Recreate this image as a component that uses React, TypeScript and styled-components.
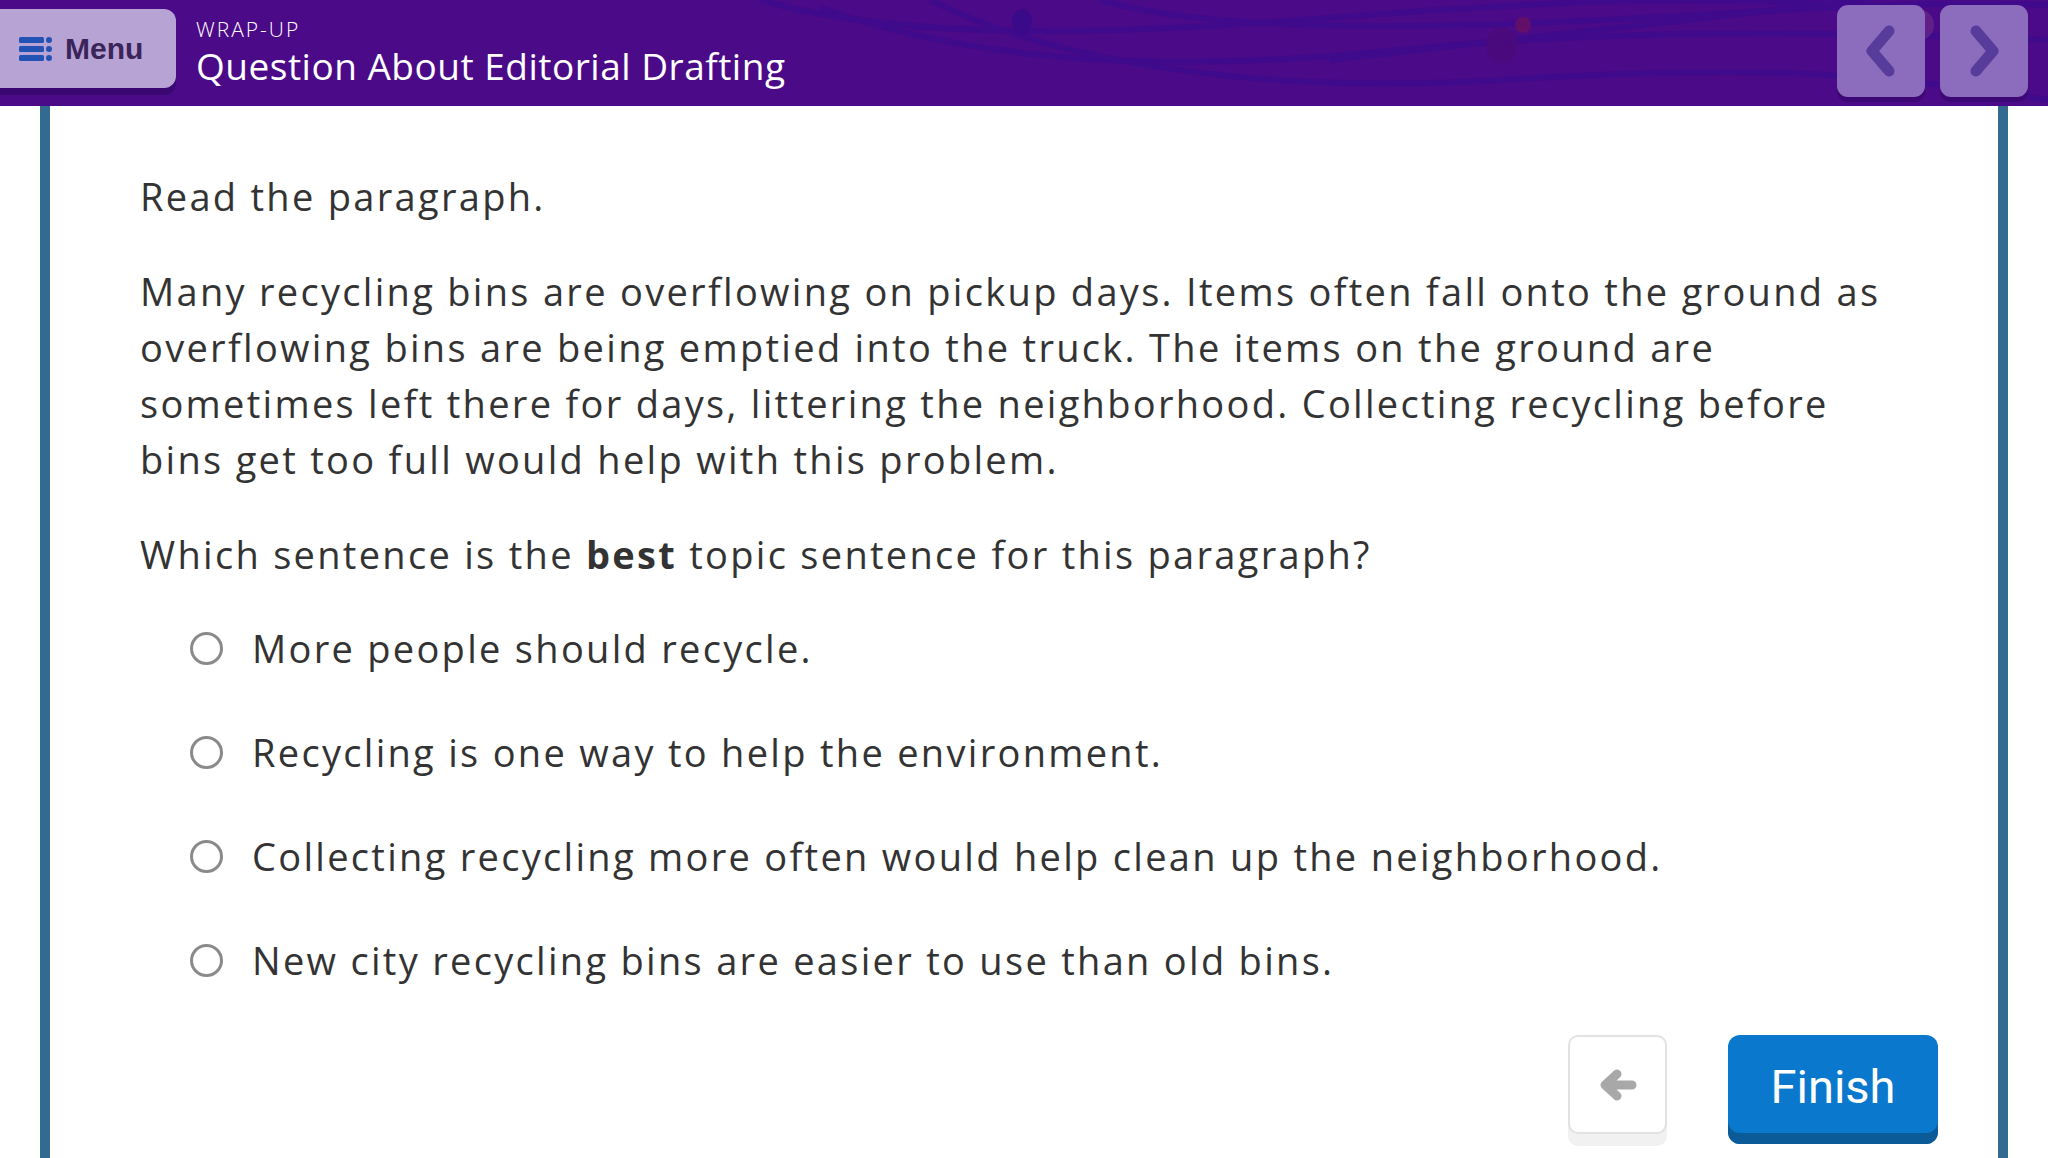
import React from 'react';
import styled, { createGlobalStyle } from 'styled-components';

const GlobalStyle = createGlobalStyle`
  html, body {
    margin: 0;
    padding: 0;
    background: #fff;
  }
  body {
    font-family: "Open Sans", "Noto Sans", sans-serif;
    color: #333;
  }
`;

const options = [
    'More people should recycle.',
    'Recycling is one way to help the environment.',
    'Collecting recycling more often would help clean up the neighborhood.',
    'New city recycling bins are easier to use than old bins.',
];

const MenuIcon = () => (
    <svg width="34" height="28" viewBox="0 0 34 28">
        <rect x="0" y="2" width="25" height="6" rx="1.5" fill="#2352b5" />
        <rect x="0" y="11" width="25" height="6" rx="1.5" fill="#2352b5" />
        <rect x="0" y="20" width="25" height="6" rx="1.5" fill="#2352b5" />
        <circle cx="30" cy="5" r="3" fill="#2352b5" />
        <circle cx="30" cy="14" r="3" fill="#2352b5" />
        <circle cx="30" cy="23" r="3" fill="#2352b5" />
    </svg>
);

const Chevron = ({ dir }: { dir: 'left' | 'right' }) => (
    <svg width="40" height="56" viewBox="0 0 40 56">
        <path
            d={dir === 'left' ? 'M28 8 L11 28 L28 48' : 'M12 8 L29 28 L12 48'}
            fill="none"
            stroke="#583c9c"
            strokeWidth="11"
            strokeLinecap="round"
            strokeLinejoin="round"
        />
    </svg>
);

const BackArrow = () => (
    <svg width="40" height="34" viewBox="0 0 40 34">
        <path d="M34 17 H10 M19 6 L7 17 L19 28" fill="none" stroke="#a8a8a8" strokeWidth="9" strokeLinecap="round" strokeLinejoin="round" />
    </svg>
);

const Swirls = () => (
    <SwirlSvg viewBox="0 0 2048 106" preserveAspectRatio="none">
        <g fill="none" stroke="#3d0a8e" strokeWidth="6" opacity="0.75">
            <path d="M760 0 C900 40 1100 35 1300 20 S1700 -10 1900 10" />
            <path d="M820 8 C1000 70 1200 70 1400 50 S1800 30 2048 40" />
            <path d="M930 0 C1050 60 1250 95 1500 80 S1850 70 2048 100" />
            <path d="M1100 0 C1200 30 1400 30 1600 20 S1900 0 2048 5" />
            <path d="M1330 60 C1500 40 1700 20 1900 -5" />
        </g>
        <ellipse cx="1022" cy="22" rx="10" ry="13" fill="#3b0a8a" />
        <ellipse cx="1502" cy="45" rx="16" ry="18" fill="#4a0a7a" opacity="0.8" />
        <circle cx="1523" cy="25" r="8" fill="#6a1060" opacity="0.8" />
        <circle cx="1918" cy="25" r="16" fill="#8c4a8a" opacity="0.35" />
    </SwirlSvg>
);

export default function App() {
    return (
        <>
            <GlobalStyle />
            <Header>
                <Swirls />
                <MenuButton type="button">
                    <MenuIcon />
                    <span>Menu</span>
                </MenuButton>
                <TitleBlock>
                    <Kicker>WRAP-UP</Kicker>
                    <Title>Question About Editorial Drafting</Title>
                </TitleBlock>
                <Nav>
                    <NavButton type="button" aria-label="Previous"><Chevron dir="left" /></NavButton>
                    <NavButton type="button" aria-label="Next"><Chevron dir="right" /></NavButton>
                </Nav>
            </Header>

            <Card>
                <Prompt>Read the paragraph.</Prompt>
                <Passage>
                    Many recycling bins are overflowing on pickup days. Items often fall onto the ground as
                    overflowing bins are being emptied into the truck. The items on the ground are
                    sometimes left there for days, littering the neighborhood. Collecting recycling before
                    bins get too full would help with this problem.
                </Passage>
                <Question>
                    Which sentence is the <strong>best</strong> topic sentence for this paragraph?
                </Question>
                <OptionList>
                    {options.map((o) => (
                        <Option key={o}>
                            <Radio />
                            <span>{o}</span>
                        </Option>
                    ))}
                </OptionList>
                <Actions>
                    <BackButton type="button" aria-label="Back"><BackArrow /></BackButton>
                    <FinishButton type="button">Finish</FinishButton>
                </Actions>
            </Card>
        </>
    );
}

const Header = styled.header`
  position: relative;
  height: 106px;
  background-color: #4b0a87;
  display: flex;
  align-items: flex-start;
  overflow: hidden;
`;

const SwirlSvg = styled.svg`
  position: absolute;
  inset: 0;
  width: 100%;
  height: 100%;
  pointer-events: none;
`;

const MenuButton = styled.button`
  position: relative;
  margin-top: 9px;
  width: 176px;
  height: 79px;
  border: none;
  border-radius: 0 12px 12px 0;
  background-color: #b8a3d5;
  box-shadow: 0 7px 0 #3b0873;
  display: flex;
  align-items: center;
  gap: 12px;
  padding: 0 0 0 19px;
  cursor: pointer;

  span {
    font-family: "Liberation Sans", Arial, sans-serif;
    font-weight: 700;
    font-size: 30px;
    color: #3a2459;
  }
`;

const TitleBlock = styled.div`
  position: relative;
  margin-left: 20px;
  padding-top: 16px;
  color: #fff;
  display: flex;
  flex-direction: column;
`;

const Kicker = styled.span`
  font-size: 21px;
  font-weight: 300;
  line-height: 26px;
  letter-spacing: 2px;
`;

const Title = styled.h1`
  margin: 1px 0 0;
  font-size: 37px;
  font-weight: 400;
  line-height: 46px;
  letter-spacing: 0.5px;
`;

const Nav = styled.nav`
  position: relative;
  margin-left: auto;
  margin-right: 20px;
  margin-top: 5px;
  display: flex;
  gap: 15px;
`;

const NavButton = styled.button`
  width: 88px;
  height: 92px;
  border: none;
  border-radius: 11px;
  background-color: #8c6cbd;
  box-shadow: 0 5px 0 #3d0875;
  display: flex;
  align-items: center;
  justify-content: center;
  cursor: pointer;
  padding: 0;
`;

const Card = styled.main`
  margin: 0 40px;
  min-height: calc(100vh - 106px);
  box-sizing: border-box;
  border-left: 10px solid #336a8f;
  border-right: 10px solid #336a8f;
  padding: 62px 60px 0 90px;
  display: flex;
  flex-direction: column;
  font-size: 38px;
  line-height: 56px;
  letter-spacing: 2.3px;
  color: #333;
`;

const Prompt = styled.p`
  margin: 0;
`;

const Passage = styled.p`
  margin: 39px 0 0;
  max-width: 1760px;
`;

const Question = styled.p`
  margin: 39px 0 0;

  strong {
    font-weight: 700;
  }
`;

const OptionList = styled.ul`
  list-style: none;
  margin: 38px 0 0;
  padding: 0 0 0 50px;
  display: flex;
  flex-direction: column;
  gap: 48px;
`;

const Option = styled.li`
  display: flex;
  align-items: center;
  gap: 29px;
  cursor: pointer;
`;

const Radio = styled.span`
  flex: none;
  width: 27px;
  height: 27px;
  border-radius: 50%;
  border: 3px solid #8a8a8a;
`;

const Actions = styled.div`
  margin-top: 47px;
  display: flex;
  justify-content: flex-end;
  align-items: flex-start;
  gap: 61px;
`;

const BackButton = styled.button`
  width: 99px;
  height: 99px;
  border: 2px solid #e2e2e2;
  border-radius: 10px;
  background: #fff;
  box-shadow: 0 12px 0 #f1f1f1;
  display: flex;
  align-items: center;
  justify-content: center;
  cursor: pointer;
  padding: 0;
`;

const FinishButton = styled.button`
  width: 210px;
  height: 109px;
  border: none;
  border-radius: 12px;
  background-color: #0a78cc;
  box-shadow: inset 0 -11px 0 #0b5b98;
  color: #fff;
  font-family: "Roboto", "Open Sans", sans-serif;
  font-size: 47px;
  letter-spacing: 0;
  padding: 0 0 6px;
  cursor: pointer;
`;
